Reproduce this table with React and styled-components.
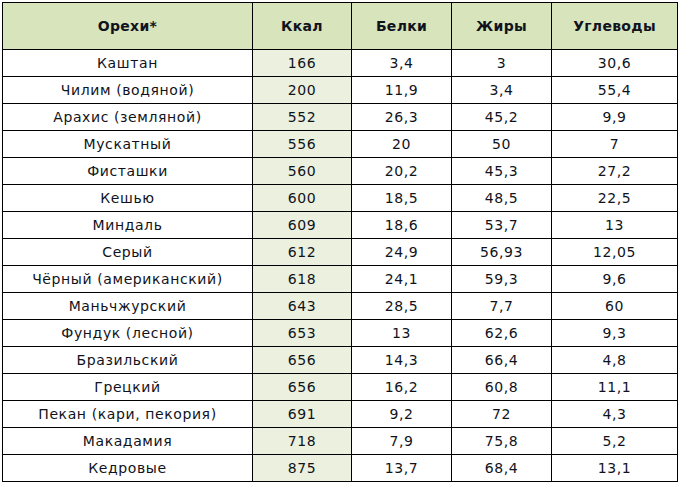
import React from 'react';
import styled, { createGlobalStyle } from 'styled-components';

const GlobalStyle = createGlobalStyle`
  html, body {
    margin: 0;
    padding: 0;
    background: #fff;
  }
`;

const rows = [
  ['Каштан', '166', '3,4', '3', '30,6'],
  ['Чилим (водяной)', '200', '11,9', '3,4', '55,4'],
  ['Арахис (земляной)', '552', '26,3', '45,2', '9,9'],
  ['Мускатный', '556', '20', '50', '7'],
  ['Фисташки', '560', '20,2', '45,3', '27,2'],
  ['Кешью', '600', '18,5', '48,5', '22,5'],
  ['Миндаль', '609', '18,6', '53,7', '13'],
  ['Серый', '612', '24,9', '56,93', '12,05'],
  ['Чёрный (американский)', '618', '24,1', '59,3', '9,6'],
  ['Маньчжурский', '643', '28,5', '7,7', '60'],
  ['Фундук (лесной)', '653', '13', '62,6', '9,3'],
  ['Бразильский', '656', '14,3', '66,4', '4,8'],
  ['Грецкий', '656', '16,2', '60,8', '11,1'],
  ['Пекан (кари, пекория)', '691', '9,2', '72', '4,3'],
  ['Макадамия', '718', '7,9', '75,8', '5,2'],
  ['Кедровые', '875', '13,7', '68,4', '13,1'],
];

const headers = ['Орехи*', 'Ккал', 'Белки', 'Жиры', 'Углеводы'];
const widths = [250, 99, 100, 100, 126];

const Wrap = styled.div`
  padding: 2px;
`;

const Table = styled.table`
  width: 676px;
  table-layout: fixed;
  border-collapse: collapse;
  font-family: 'DejaVu Sans', Verdana, sans-serif;
  font-size: 14px;
  letter-spacing: 0.6px;
  color: #10131c;
`;

const HeadCell = styled.th`
  height: 46px;
  padding: 0;
  border: 1px solid #000;
  background: #d8e4bc;
  font-weight: bold;
  letter-spacing: 0.3px;
  text-align: center;
  vertical-align: middle;
`;

const Cell = styled.td`
  height: 26px;
  padding: 0;
  border: 1px solid #000;
  background: ${p => (p.$tinted ? '#ebf1de' : '#fff')};
  text-align: center;
  vertical-align: middle;
  white-space: nowrap;
`;

export default function App() {
  return (
    <Wrap>
      <GlobalStyle />
      <Table>
        <colgroup>
          {widths.map((w, i) => <col key={i} style={{ width: w }} />)}
        </colgroup>
        <thead>
          <tr>
            {headers.map(h => <HeadCell key={h}>{h}</HeadCell>)}
          </tr>
        </thead>
        <tbody>
          {rows.map(r => (
            <tr key={r[0]}>
              {r.map((v, i) => <Cell key={i} $tinted={i === 1}>{v}</Cell>)}
            </tr>
          ))}
        </tbody>
      </Table>
    </Wrap>
  );
}
